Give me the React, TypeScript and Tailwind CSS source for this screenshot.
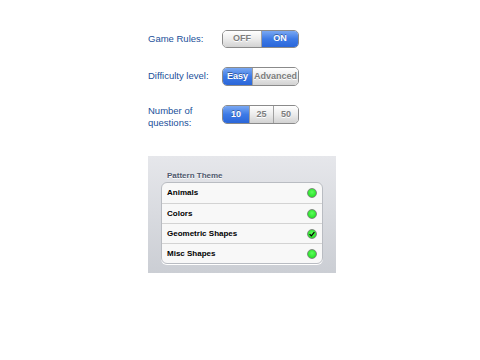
import React from "react";

const font = { fontFamily: "'Liberation Sans', Arial, sans-serif" };

function Segmented({
  items,
  active,
  widths,
  height,
}: {
  items: string[];
  active: number;
  widths: number[];
  height: string;
}) {
  return (
    <div
      className={`flex ${height} overflow-hidden rounded-[5px] border border-[#8a8a8a] shadow-[0_1px_0_rgba(255,255,255,0.9)]`}
    >
      {items.map((label, i) => {
        const on = i === active;
        return (
          <div
            key={label}
            style={{ width: widths[i] }}
            className={`flex items-center justify-center text-[9px] font-bold ${
              i > 0 ? "border-l border-[#a0a0a0]" : ""
            } ${
              on
                ? "bg-gradient-to-b from-[#7aa8f2] via-[#3d7ae6] to-[#2a66d9] text-white [text-shadow:0_-1px_0_rgba(0,0,0,0.35)]"
                : "bg-gradient-to-b from-[#ffffff] via-[#ececec] to-[#d2d2d2] text-[#7d7d7d] [text-shadow:0_1px_0_#fff]"
            }`}
          >
            {label}
          </div>
        );
      })}
    </div>
  );
}

const themes = [
  { name: "Animals", checked: false },
  { name: "Colors", checked: false },
  { name: "Geometric Shapes", checked: true },
  { name: "Misc Shapes", checked: false },
];

export default function App() {
  return (
    <div className="h-[360px] w-[480px] bg-white pl-[148px] pt-[30px]" style={font}>
      <div className="flex items-center">
        <div className="w-[74px] text-[9.5px] text-[#21509a]">Game Rules:</div>
        <Segmented items={["OFF", "ON"]} active={1} widths={[38, 37]} height="h-[18px]" />
      </div>

      <div className="mt-[19px] flex items-center">
        <div className="w-[74px] text-[9.5px] text-[#21509a]">Difficulty level:</div>
        <Segmented items={["Easy", "Advanced"]} active={0} widths={[29, 46]} height="h-[19px]" />
      </div>

      <div className="mt-[14px] flex items-center">
        <div className="w-[74px] pt-[5px] text-[9.5px] leading-[12px] text-[#21509a]">
          Number of
          <br />
          questions:
        </div>
        <Segmented items={["10", "25", "50"]} active={0} widths={[26, 24, 25]} height="h-[19px]" />
      </div>

      <div className="mt-[27px] h-[117px] w-[188px] bg-gradient-to-b from-[#e6e7eb] to-[#cbced4] px-[13px] pt-[13px]">
        <div className="pl-[6px] text-[8px] font-bold leading-[13px] text-[#4e586d] [text-shadow:0_1px_0_#fff]">
          Pattern Theme
        </div>
        <div className="overflow-hidden rounded-[6px] border border-[#b9bcc2] bg-[#f8f8f8] shadow-[0_1px_0_#fff]">
          {themes.map((t, i) => (
            <div
              key={t.name}
              className={`flex h-[20px] items-center justify-between pl-[5px] pr-[5px] ${
                i > 0 ? "border-t border-[#d3d3d3]" : ""
              }`}
            >
              <span className="text-[8px] font-bold text-black">{t.name}</span>
              <span className="flex h-[10px] w-[10px] items-center justify-center rounded-full border border-[#7c8a7c] bg-[radial-gradient(circle_at_50%_40%,#5cff5c,#16d416)]">
                {t.checked && (
                  <svg viewBox="0 0 10 10" className="h-[8px] w-[8px]">
                    <path d="M2 5.2 L4.2 7.3 L8 2.6" fill="none" stroke="#000" strokeWidth="1.6" />
                  </svg>
                )}
              </span>
            </div>
          ))}
        </div>
      </div>
    </div>
  );
}
